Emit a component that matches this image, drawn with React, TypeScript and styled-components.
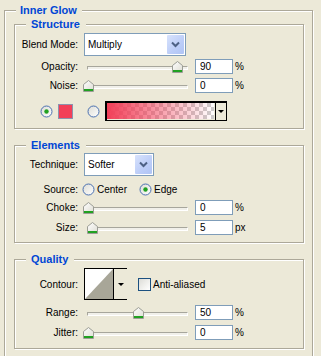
import React from 'react';
import styled, { createGlobalStyle } from 'styled-components';

const GlobalStyle = createGlobalStyle`
  html, body {
    margin: 0;
    padding: 0;
    background: #ece9d8;
  }
  body {
    font-family: "Liberation Sans", Arial, sans-serif;
    font-size: 10px;
    color: #000;
    overflow: hidden;
  }
`;

const Page = styled.div`
  width: 321px;
  height: 356px;
  overflow: hidden;
  padding: 4px 0 0 4px;
  box-sizing: border-box;
`;

const Group = styled.fieldset<{ $outer?: boolean }>`
  margin: ${(p) => (p.$outer ? '0' : '0 8px 0 9px')};
  padding: 0;
  width: ${(p) => (p.$outer ? '309px' : 'auto')};
  height: ${(p) => (p.$outer ? '380px' : 'auto')};
  box-sizing: border-box;
  min-width: 0;
  border: 1px solid #aca899;
  box-shadow: inset 1px 1px 0 #fff, 1px 1px 0 #fff;
`;

const Legend = styled.legend<{ $outer?: boolean }>`
  position: relative;
  margin-left: 11px;
  padding: ${(p) => (p.$outer ? '0 5px 0 4px' : '0 6px 0 5px')};
  font-size: 11px;
  line-height: 13px;
  font-weight: bold;
  color: #0046d5;
  background: #ece9d8;
`;

const Section = styled.div<{ $top: number; $bottom: number }>`
  margin-top: ${(p) => p.$top}px;
  padding-bottom: ${(p) => p.$bottom}px;
`;

const Row = styled.div<{ $h: number; $mt: number }>`
  display: flex;
  align-items: center;
  height: ${(p) => p.$h}px;
  margin-top: ${(p) => p.$mt}px;
`;

const Label = styled.span`
  flex: none;
  width: 63px;
  text-align: right;
  white-space: nowrap;
`;

const Combo = styled.div<{ $w: number }>`
  display: flex;
  width: ${(p) => p.$w}px;
  height: 23px;
  margin-left: 6px;
  box-sizing: border-box;
  border: 1px solid #7f9db9;
  background: #fff;
`;

const ComboText = styled.span`
  flex: 1;
  display: flex;
  align-items: center;
  padding-left: 3px;
  font-size: 10px;
`;

const ComboButton = styled.span`
  flex: none;
  width: 17px;
  margin: 1px;
  display: flex;
  align-items: center;
  justify-content: center;
  background: linear-gradient(135deg, #d8e3fc 0%, #bccdf8 60%, #b0c4f5 100%);
  border-radius: 1px;
`;

const SliderBox = styled.div`
  position: relative;
  flex: none;
  width: 105px;
  height: 12px;
  margin-left: 5px;
  display: flex;
  align-items: center;
`;

const Track = styled.div`
  margin: 2px 0 0 4px;
  width: 100px;
  height: 2px;
  border: 1px solid;
  border-color: #a7a69c #fff #fff #a7a69c;
  background: #f1f0ea;
`;

const ThumbWrap = styled.div`
  position: absolute;
  top: 0;
  height: 12px;
`;

const NumBox = styled.div`
  flex: none;
  width: 38px;
  height: 15px;
  margin-left: 7px;
  box-sizing: border-box;
  border: 1px solid #7f9db9;
  background: #fff;
  padding-left: 4px;
  display: flex;
  align-items: center;
`;

const Unit = styled.span`
  margin-left: 2px;
`;

const RadioMark = styled.span<{ $ml: number }>`
  flex: none;
  width: 13px;
  height: 13px;
  margin-left: ${(p) => p.$ml}px;
  display: flex;
`;

const Swatch = styled.span`
  flex: none;
  width: 15px;
  height: 15px;
  margin-left: 5px;
  box-sizing: border-box;
  border: 1px solid #8c93ad;
  background: #f23f58;
`;

const GradientPicker = styled.div`
  flex: none;
  display: flex;
  width: 122px;
  height: 20px;
  margin-left: 5px;
  box-sizing: border-box;
  border: 1px solid #000;
  border-top-width: 2px;
  border-left-width: 2px;
`;

const GradientFill = styled.span`
  flex: 1;
  margin: 0 1px 1px 0;
  background:
    linear-gradient(to right, rgba(242, 63, 88, 1) 0%, rgba(242, 63, 88, 0.55) 45%, rgba(242, 63, 88, 0) 100%),
    conic-gradient(#cdcdcd 25%, #fff 0 50%, #cdcdcd 0 75%, #fff 0) 0 0 / 8px 8px;
`;

const DropPart = styled.span<{ $w: number }>`
  flex: none;
  width: ${(p) => p.$w}px;
  border-left: 1px solid #000;
  display: flex;
  align-items: center;
  justify-content: center;
  background: #ece9d8;
`;

const Arrow = styled.span`
  width: 0;
  height: 0;
  border-left: 3px solid transparent;
  border-right: 3px solid transparent;
  border-top: 3px solid #000;
`;

const Option = styled.span<{ $w?: number }>`
  display: flex;
  align-items: center;
  width: ${(p) => (p.$w ? `${p.$w}px` : 'auto')};
`;

const OptionText = styled.span`
  margin-left: 2px;
`;

const Contour = styled.div`
  flex: none;
  display: flex;
  width: 43px;
  height: 32px;
  margin-left: 6px;
  box-sizing: border-box;
  border: 1px solid #000;
`;

const ContourPreview = styled.span`
  flex: none;
  width: 28px;
  display: flex;
  background: #fff;
`;

const CheckBox = styled.span`
  flex: none;
  width: 13px;
  height: 13px;
  margin-left: 11px;
  box-sizing: border-box;
  border: 1px solid #1c5180;
  background: linear-gradient(135deg, #dcdcd7 0%, #f2f2ef 60%, #fff 100%);
`;

function Chevron() {
  return (
    <svg width="9" height="7" viewBox="0 0 9 7">
      <path d="M1 1.5 L4.5 5 L8 1.5" fill="none" stroke="#4d6185" strokeWidth="2" />
    </svg>
  );
}

function Radio({ checked, ml = 0 }: { checked?: boolean; ml?: number }) {
  return (
    <RadioMark $ml={ml}>
      <svg width="13" height="13" viewBox="0 0 13 13">
        <defs>
          <linearGradient id="radioFill" x1="0" y1="0" x2="1" y2="1">
            <stop offset="0" stopColor="#dcdcd5" />
            <stop offset="1" stopColor="#ffffff" />
          </linearGradient>
        </defs>
        <circle cx="6.5" cy="6.5" r="5.5" fill="url(#radioFill)" stroke="#4a70b0" />
        {checked && <circle cx="6.5" cy="6.5" r="2.2" fill="#21a121" />}
      </svg>
    </RadioMark>
  );
}

function Slider({ value }: { value: number }) {
  return (
    <SliderBox>
      <Track />
      <ThumbWrap style={{ left: Math.round(value * 99) }}>
        <svg width="11" height="12" viewBox="0 0 11 12">
          <defs>
            <linearGradient id="thumbFill" x1="0" y1="0" x2="1" y2="1">
              <stop offset="0" stopColor="#ffffff" />
              <stop offset="1" stopColor="#dddcd2" />
            </linearGradient>
          </defs>
          <path d="M0.5 4.5 L5.5 0.5 L10.5 4.5 L10.5 11.5 L0.5 11.5 Z" fill="url(#thumbFill)" stroke="#9c9d95" />
          <rect x="1" y="9" width="9" height="2" fill="#21a121" />
        </svg>
      </ThumbWrap>
    </SliderBox>
  );
}

function SliderRow({ label, value, fraction, unit, mt }: { label: string; value: string; fraction: number; unit: string; mt: number }) {
  return (
    <Row $h={15} $mt={mt}>
      <Label>{label}</Label>
      <Slider value={fraction} />
      <NumBox>{value}</NumBox>
      <Unit>{unit}</Unit>
    </Row>
  );
}

export default function App() {
  return (
    <>
      <GlobalStyle />
      <Page>
        <Group $outer>
          <Legend $outer>Inner Glow</Legend>

          <Section $top={1} $bottom={0}>
            <Group>
              <Legend>Structure</Legend>
              <Section $top={0} $bottom={7}>
                <Row $h={23} $mt={2}>
                  <Label>Blend Mode:</Label>
                  <Combo $w={102}>
                    <ComboText>Multiply</ComboText>
                    <ComboButton>
                      <Chevron />
                    </ComboButton>
                  </Combo>
                </Row>
                <SliderRow label="Opacity:" value="90" fraction={0.9} unit="%" mt={3} />
                <SliderRow label="Noise:" value="0" fraction={0} unit="%" mt={4} />
                <Row $h={20} $mt={8}>
                  <Radio checked ml={25} />
                  <Swatch />
                  <Radio ml={14} />
                  <GradientPicker>
                    <GradientFill />
                    <DropPart $w={10}>
                      <Arrow />
                    </DropPart>
                  </GradientPicker>
                </Row>
              </Section>
            </Group>
          </Section>

          <Section $top={10} $bottom={0}>
            <Group>
              <Legend>Elements</Legend>
              <Section $top={0} $bottom={7}>
                <Row $h={23} $mt={1}>
                  <Label>Technique:</Label>
                  <Combo $w={70}>
                    <ComboText>Softer</ComboText>
                    <ComboButton>
                      <Chevron />
                    </ComboButton>
                  </Combo>
                </Row>
                <Row $h={14} $mt={6}>
                  <Label>Source:</Label>
                  <Option $w={61}>
                    <Radio ml={4} />
                    <OptionText>Center</OptionText>
                  </Option>
                  <Option>
                    <Radio checked />
                    <OptionText>Edge</OptionText>
                  </Option>
                </Row>
                <SliderRow label="Choke:" value="0" fraction={0} unit="%" mt={4} />
                <SliderRow label="Size:" value="5" fraction={0.045} unit="px" mt={5} />
              </Section>
            </Group>
          </Section>

          <Section $top={10} $bottom={0}>
            <Group>
              <Legend>Quality</Legend>
              <Section $top={0} $bottom={8}>
                <Row $h={32} $mt={2}>
                  <Label>Contour:</Label>
                  <Contour>
                    <ContourPreview>
                      <svg width="28" height="30" viewBox="0 0 28 30">
                        <polygon points="0,30 28,0 28,30" fill="#a8a698" />
                      </svg>
                    </ContourPreview>
                    <DropPart $w={13}>
                      <Arrow />
                    </DropPart>
                  </Contour>
                  <CheckBox />
                  <OptionText>Anti-aliased</OptionText>
                </Row>
                <SliderRow label="Range:" value="50" fraction={0.5} unit="%" mt={5} />
                <SliderRow label="Jitter:" value="0" fraction={0} unit="%" mt={5} />
              </Section>
            </Group>
          </Section>
        </Group>
      </Page>
    </>
  );
}
